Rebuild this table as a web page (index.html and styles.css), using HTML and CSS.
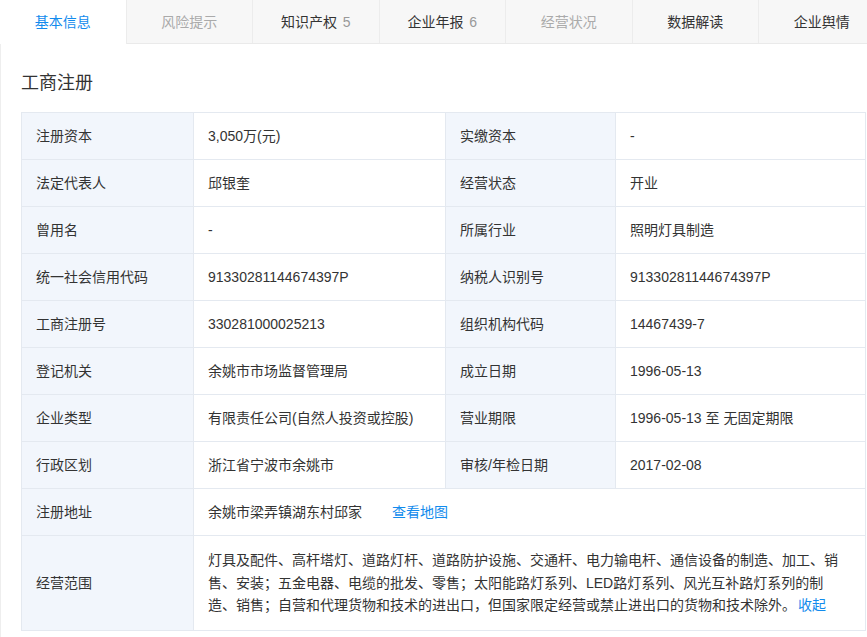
FILE: index.html
```html
<!DOCTYPE html>
<html lang="zh-CN">
<head>
<meta charset="utf-8">
<title>工商注册</title>
<link rel="stylesheet" href="styles.css">
</head>
<body>
<div class="page">
  <nav class="tabs">
    <a class="tab active">基本信息</a>
    <a class="tab disabled">风险提示</a>
    <a class="tab">知识产权 <span class="count">5</span></a>
    <a class="tab">企业年报 <span class="count">6</span></a>
    <a class="tab disabled">经营状况</a>
    <a class="tab">数据解读</a>
    <a class="tab">企业舆情</a>
  </nav>
  <section class="main">
    <h2 class="title">工商注册</h2>
    <table class="info">
      <colgroup>
        <col class="c1"><col class="c2"><col class="c3"><col class="c4">
      </colgroup>
      <tbody>
        <tr><td class="lb">注册资本</td><td>3,050万(元)</td><td class="lb">实缴资本</td><td>-</td></tr>
        <tr><td class="lb">法定代表人</td><td>邱银奎</td><td class="lb">经营状态</td><td>开业</td></tr>
        <tr><td class="lb">曾用名</td><td>-</td><td class="lb">所属行业</td><td>照明灯具制造</td></tr>
        <tr><td class="lb">统一社会信用代码</td><td>91330281144674397P</td><td class="lb">纳税人识别号</td><td>91330281144674397P</td></tr>
        <tr><td class="lb">工商注册号</td><td>330281000025213</td><td class="lb">组织机构代码</td><td>14467439-7</td></tr>
        <tr><td class="lb">登记机关</td><td>余姚市市场监督管理局</td><td class="lb">成立日期</td><td>1996-05-13</td></tr>
        <tr><td class="lb">企业类型</td><td>有限责任公司(自然人投资或控股)</td><td class="lb">营业期限</td><td>1996-05-13 至 无固定期限</td></tr>
        <tr><td class="lb">行政区划</td><td>浙江省宁波市余姚市</td><td class="lb">审核/年检日期</td><td>2017-02-08</td></tr>
        <tr><td class="lb">注册地址</td><td colspan="3">余姚市梁弄镇湖东村邱家<a class="link map">查看地图</a></td></tr>
        <tr><td class="lb">经营范围</td><td colspan="3" class="scope">灯具及配件、高杆塔灯、道路灯杆、道路防护设施、交通杆、电力输电杆、通信设备的制造、加工、销售、安装；五金电器、电缆的批发、零售；太阳能路灯系列、LED路灯系列、风光互补路灯系列的制造、销售；自营和代理货物和技术的进出口，但国家限定经营或禁止进出口的货物和技术除外。<a class="link more">收起</a></td></tr>
      </tbody>
    </table>
  </section>
</div>
</body>
</html>
```
FILE: styles.css
```css
html, body {
  margin: 0;
  padding: 0;
  background: #fff;
}
body {
  font-family: "Liberation Sans", "Noto Sans CJK SC", sans-serif;
  font-size: 14px;
  color: #333;
  overflow: hidden;
}
.page {
  width: 867px;
  overflow: hidden;
}
.tabs {
  display: flex;
  height: 43px;
  border-bottom: 1px solid #eaeaea;
  width: 900px;
}
.tab {
  flex: 0 0 126.5px;
  box-sizing: border-box;
  height: 43px;
  line-height: 44px;
  text-align: center;
  background: #f7f7f7;
  border-right: 1px solid #ececec;
  color: #333;
  cursor: pointer;
}
.tab.active {
  background: #fff;
  color: #128bed;
  height: 44px;
}
.tab.disabled {
  color: #aaa;
}
.count {
  color: #999;
  margin-left: 2px;
}
.main {
  border-left: 1px solid #eee;
  padding: 27px 0 20px 20px;
}
.title {
  margin: 0 0 17px 0;
  font-size: 18px;
  font-weight: normal;
  line-height: 24px;
  color: #333;
}
.info {
  border-collapse: collapse;
  table-layout: fixed;
  width: 844px;
}
.c1 { width: 172px; }
.c2 { width: 252px; }
.c3 { width: 170px; }
.c4 { width: 250px; }
.info td {
  border: 1px solid #e4e9f0;
  padding: 12px 15px 12px 14px;
  line-height: 22px;
  vertical-align: middle;
  color: #333;
}
.info td.lb {
  background: #f2f6fc;
  padding-left: 14px;
}
.info td.scope {
  padding: 13px 24px 13px 14px;
  line-height: 22.7px;
}
.link {
  color: #128bed;
  cursor: pointer;
}
.map {
  margin-left: 30px;
}
.more {
  margin-left: 2px;
}
```
